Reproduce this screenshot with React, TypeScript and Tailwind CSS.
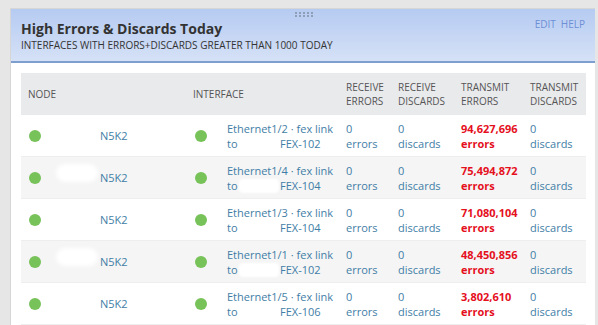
const rows = [
  { iface: 'Ethernet1/2', fex: 'FEX-102', tx: '94,627,696', blot: false },
  { iface: 'Ethernet1/4', fex: 'FEX-104', tx: '75,494,872', blot: true },
  { iface: 'Ethernet1/3', fex: 'FEX-104', tx: '71,080,104', blot: false },
  { iface: 'Ethernet1/1', fex: 'FEX-102', tx: '48,450,856', blot: true },
  { iface: 'Ethernet1/5', fex: 'FEX-106', tx: '3,802,610', blot: false },
];

const cols = 'grid grid-cols-[165px_153px_52px_63px_69px_63px]';

function Dot() {
  return <span className="block h-3 w-3 shrink-0 rounded-full bg-[#78c25a]" />;
}

export default function App() {
  return (
    <div
      className="h-[325px] w-[598px] overflow-hidden bg-[#e6e6e6] pl-[10px] pt-2 pr-[3px]"
      style={{ fontFamily: '"Open Sans", "Liberation Sans", sans-serif' }}
    >
      <div className="h-full border-l border-t border-[#d6d6d6] bg-white">
        <div className="relative flex h-[54px] justify-between border-b-2 border-[#7f9ed0] bg-gradient-to-b from-[#b6cbf2] to-[#d5e1f6] pl-[10px] pr-[10px]">
          <div className="pt-[10px]">
            <div className="text-[14px] font-bold leading-[20px] text-[#333]">High Errors &amp; Discards Today</div>
            <div className="text-[10px] leading-[13px] text-[#333]">INTERFACES WITH ERRORS+DISCARDS GREATER THAN 1000 TODAY</div>
          </div>
          <div className="flex gap-[5px] pt-[8px] text-[10px] leading-[14px] text-[#6d8fd6]">
            <span>EDIT</span>
            <span>HELP</span>
          </div>
          <div className="absolute left-[284px] top-[3px] grid grid-cols-5 gap-x-[2px] gap-y-[1px]">
            {Array.from({ length: 10 }).map((_, i) => (
              <span key={i} className="block h-[2px] w-[2px] bg-[#8f9fb8]" />
            ))}
          </div>
        </div>

        <div className="px-[10px] pt-[10px]">
          <div className="w-[565px] text-[11px] leading-[15px]">
            <div className={`${cols} h-[42px] items-center bg-[#e9eaec] text-[10px] leading-[14px] text-[#555]`}>
              <div className="pl-[7px]">NODE</div>
              <div className="pl-[7px]">INTERFACE</div>
              <div className="pl-[7px]">RECEIVE<br />ERRORS</div>
              <div className="pl-[7px]">RECEIVE<br />DISCARDS</div>
              <div className="pl-[7px]">TRANSMIT<br />ERRORS</div>
              <div className="pl-[7px]">TRANSMIT<br />DISCARDS</div>
            </div>
            {rows.map((r, i) => (
              <div
                key={r.iface}
                className={`${cols} h-[42px] items-center border-b border-[#eeeeee] text-[#3f7ea6] ${i % 2 === 1 ? 'bg-[#f5f5f5]' : 'bg-white'}`}
              >
                <div className="relative flex items-center pl-[8px]">
                  <Dot />
                  {r.blot && (
                    <span className="absolute left-[35px] top-[-6px] h-[18px] w-[42px] rounded-full bg-white blur-[2px]" />
                  )}
                  <span className="relative ml-[59px]">N5K2</span>
                </div>
                <div className="flex items-center pl-[9px]">
                  <Dot />
                  <div className="ml-[20px] whitespace-nowrap">
                    <div>{r.iface} · fex link</div>
                    <div className="flex">
                      <span className="relative w-[53px]">
                        to
                        {r.blot && (
                          <span className="absolute left-[12px] top-[1px] h-[14px] w-[40px] rounded-sm bg-white blur-[1px]" />
                        )}
                      </span>
                      <span>{r.fex}</span>
                    </div>
                  </div>
                </div>
                <div className="pl-[7px]">0<br />errors</div>
                <div className="pl-[7px]">0<br />discards</div>
                <div className="pl-[7px] font-bold text-[#e5101d]">{r.tx}<br />errors</div>
                <div className="pl-[7px]">0<br />discards</div>
              </div>
            ))}
          </div>
        </div>
      </div>
    </div>
  );
}
